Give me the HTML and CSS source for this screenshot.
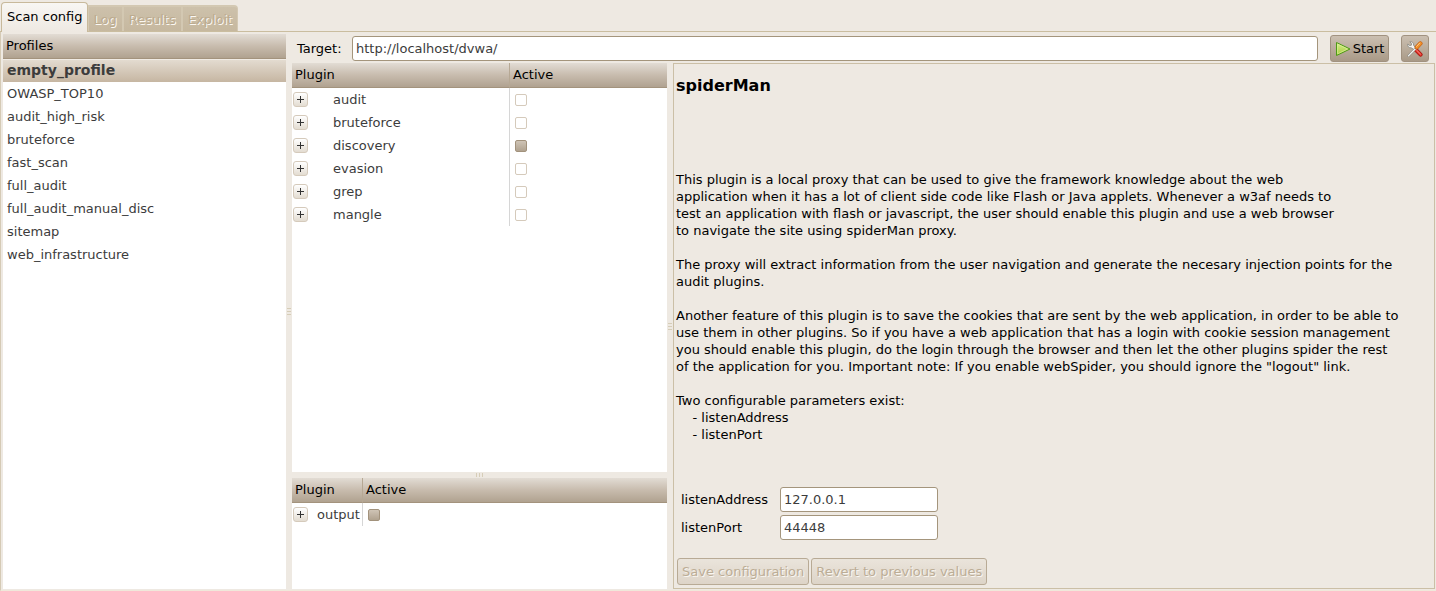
FILE: index.html
```
<!DOCTYPE html>
<html lang="en">
<head>
<meta charset="utf-8">
<title>Scan config</title>
<link rel="stylesheet" href="styles.css">
</head>
<body>
<div class="window">
  <nav class="tabs">
    <button class="tab tab-active" type="button">Scan config</button>
    <button class="tab" type="button" disabled>Log</button>
    <button class="tab" type="button" disabled>Results</button>
    <button class="tab" type="button" disabled>Exploit</button>
  </nav>
  <main class="page">
    <section class="profiles">
      <h2 class="list-header">Profiles</h2>
      <ul class="profile-list">
        <li class="profile profile-selected">empty_profile</li>
        <li class="profile">OWASP_TOP10</li>
        <li class="profile">audit_high_risk</li>
        <li class="profile">bruteforce</li>
        <li class="profile">fast_scan</li>
        <li class="profile">full_audit</li>
        <li class="profile">full_audit_manual_disc</li>
        <li class="profile">sitemap</li>
        <li class="profile">web_infrastructure</li>
      </ul>
    </section>
    <div class="grip"><i></i><i></i><i></i></div>
    <div class="workspace">
      <form class="toolbar">
        <label class="target-label" for="target">Target:</label>
        <input class="entry target-entry" id="target" type="text" value="http://localhost/dvwa/">
        <button class="button start" type="button">
          <svg width="16" height="16" viewBox="0 0 16 16" aria-hidden="true">
            <defs><linearGradient id="play" x1="0" y1="0" x2="0" y2="1"><stop offset="0" stop-color="#d8ee8c"/><stop offset="1" stop-color="#a4cc3a"/></linearGradient></defs>
            <path d="M1.5 1.5L15 8L1.5 14.5Z" fill="url(#play)" stroke="#4e9a16" stroke-linejoin="round"/>
            <path d="M2.6 3.2L12.6 8L2.6 12.8Z" fill="none" stroke="#e0f2a4" stroke-opacity=".6"/>
          </svg>
          Start
        </button>
        <button class="button tools" type="button" aria-label="Advanced target settings">
          <svg width="16" height="16" viewBox="0 0 16 16" aria-hidden="true">
            <path d="M8.5 8.5L13.6 13.6" stroke="#a3150f" stroke-width="4" stroke-linecap="round"/>
            <path d="M8.5 8.5L13.6 13.6" stroke="#e3352a" stroke-width="2.6" stroke-linecap="round"/>
            <path d="M9.6 9.2L13.4 13" stroke="#f79a8c" stroke-width=".9" stroke-linecap="round"/>
            <path d="M2.8 .8C5 .2 7 2 6.6 4.2L8.6 7L7 8.6L4.2 6.8C2 7.2 .2 5.2 .8 3L2.6 4.6L4.4 4.2L4.6 2.6Z" fill="#f4f4f2" stroke="#858580" stroke-width=".8" stroke-linejoin="round"/>
            <path d="M1.4 14.8L8.2 8" stroke="#85857f" stroke-width="2.2" stroke-linecap="round"/>
            <path d="M1.4 14.8L8.2 8" stroke="#f8f8f6" stroke-width="1.2" stroke-linecap="round"/>
            <path d="M9.8 6.2L13.4 2.4" stroke="#c45a0a" stroke-width="4.2" stroke-linecap="round"/>
            <path d="M9.8 6.2L13.4 2.4" stroke="#f0902c" stroke-width="3" stroke-linecap="round"/>
            <path d="M9.6 5.4L12.6 2.2" stroke="#fccb84" stroke-width="1" stroke-linecap="round"/>
          </svg>
        </button>
      </form>
      <div class="panes">
        <div class="plugin-lists">
          <div class="list-pane list-pane-main">
            <table class="plugins">
              <colgroup><col class="col-name"><col></colgroup>
              <thead><tr><th>Plugin</th><th>Active</th></tr></thead>
              <tbody>
                <tr><td><div class="node"><button class="expander" type="button" aria-label="Expand audit"></button><label for="p1">audit</label></div></td><td><input class="check" id="p1" type="checkbox"></td></tr>
                <tr><td><div class="node"><button class="expander" type="button" aria-label="Expand bruteforce"></button><label for="p2">bruteforce</label></div></td><td><input class="check" id="p2" type="checkbox"></td></tr>
                <tr><td><div class="node"><button class="expander" type="button" aria-label="Expand discovery"></button><label for="p3">discovery</label></div></td><td><input class="check check-mixed" id="p3" type="checkbox"></td></tr>
                <tr><td><div class="node"><button class="expander" type="button" aria-label="Expand evasion"></button><label for="p4">evasion</label></div></td><td><input class="check" id="p4" type="checkbox"></td></tr>
                <tr><td><div class="node"><button class="expander" type="button" aria-label="Expand grep"></button><label for="p5">grep</label></div></td><td><input class="check" id="p5" type="checkbox"></td></tr>
                <tr><td><div class="node"><button class="expander" type="button" aria-label="Expand mangle"></button><label for="p6">mangle</label></div></td><td><input class="check" id="p6" type="checkbox"></td></tr>
              </tbody>
            </table>
          </div>
          <div class="grip grip-row"><i></i><i></i><i></i></div>
          <div class="list-pane list-pane-output">
            <table class="plugins plugins-output">
              <colgroup><col class="col-name"><col></colgroup>
              <thead><tr><th>Plugin</th><th>Active</th></tr></thead>
              <tbody>
                <tr><td><div class="node"><button class="expander" type="button" aria-label="Expand output"></button><label for="p7">output</label></div></td><td><input class="check check-mixed" id="p7" type="checkbox"></td></tr>
              </tbody>
            </table>
          </div>
        </div>
        <div class="grip"><i></i><i></i><i></i></div>
        <section class="details">
          <h1 class="plugin-title">spiderMan</h1>
          <p class="description">This plugin is a local proxy that can be used to give the framework knowledge about the web
application when it has a lot of client side code like Flash or Java applets. Whenever a w3af needs to
test an application with flash or javascript, the user should enable this plugin and use a web browser
to navigate the site using spiderMan proxy.

The proxy will extract information from the user navigation and generate the necesary injection points for the
audit plugins.

Another feature of this plugin is to save the cookies that are sent by the web application, in order to be able to
use them in other plugins. So if you have a web application that has a login with cookie session management
you should enable this plugin, do the login through the browser and then let the other plugins spider the rest
of the application for you. Important note: If you enable webSpider, you should ignore the "logout" link.

Two configurable parameters exist:
    - listenAddress
    - listenPort</p>
          <form class="options">
            <label for="address">listenAddress</label>
            <input class="entry" id="address" type="text" value="127.0.0.1">
            <label for="port">listenPort</label>
            <input class="entry" id="port" type="text" value="44448">
          </form>
          <div class="actions">
            <button class="button" type="button" disabled>Save configuration</button>
            <button class="button" type="button" disabled>Revert to previous values</button>
          </div>
        </section>
      </div>
    </div>
  </main>
</div>
</body>
</html>
```
FILE: styles.css
```
* { box-sizing: border-box; }

body {
  margin: 0;
  background: #eee9e2;
  color: #000;
  font: 13px/17px "DejaVu Sans", sans-serif;
}

button, input { font: inherit; color: inherit; margin: 0; }

.window {
  display: flex;
  flex-direction: column;
  min-height: 100vh;
  padding: 2px 0 0;
}

/* Notebook tabs */
.tabs { display: flex; align-items: flex-end; height: 30px; padding-left: 1px; border-bottom: 1px solid #cabd9f; }
.tab {
  height: 26px;
  padding: 1px 5px 0;
  border: 1px solid #d3c8b2;
  border-top-width: 2px;
  border-bottom: 0;
  background: linear-gradient(#cdc1ab, #c6b89f);
  color: #bcab8f;
  text-shadow: 1px 1px #fbf8f2;
  white-space: nowrap;
}
.tab:last-child { border-radius: 0 4px 0 0; }
.tab-active {
  height: 30px;
  margin-bottom: -1px;
  padding: 0 4px 2px 5px;
  border-width: 1px 1px 0;
  border-color: #c8b99b;
  border-radius: 4px 4px 0 0;
  background: linear-gradient(#f8f6f3, #eee9e2);
  color: #000;
  text-shadow: none;
}

.page {
  display: flex;
  flex: 1;
  padding: 2px 1px 1px 2px;
  border-left: 1px solid #d5cab5;
  border-bottom: 1px solid #f0e8da;
}

.list-header, .plugins th {
  height: 25px;
  margin: 0;
  padding: 0 3px;
  border-bottom: 1px solid #a3937d;
  background: linear-gradient(#e2dcd4, #c8bcae 50%, #b0a290);
  font-weight: normal;
  font-size: inherit;
  line-height: 24px;
  text-align: left;
}

/* Profiles */
.profiles { flex: 0 0 283px; background: #fff; }
.profile-list { margin: 0; padding: 0; list-style: none; color: #3c3c3c; }
.profile { height: 23px; padding: 0 4px; line-height: 23px; }
.profile-selected {
  background: linear-gradient(#e3dbd0, #c6b6a2);
  border-top: 1px solid #f0ebe4;
  font-weight: bold;
  font-size: 14px;
  line-height: 21px;
}

/* Pane separators */
.grip { display: flex; flex: 0 0 6px; flex-direction: column; align-items: center; justify-content: center; gap: 2px; }
.grip i { width: 4px; height: 1px; background: #d6cdb8; }
.grip-row { flex-direction: row; }
.grip-row i { width: 1px; height: 4px; }

.workspace { display: flex; flex: 1; flex-direction: column; min-width: 0; }

/* Target toolbar */
.toolbar { display: flex; align-items: center; height: 29px; padding: 0 6px 0 5px; }
.target-label { width: 55px; }
.entry {
  height: 25px;
  min-width: 0;
  padding: 0 3px;
  border: 1px solid #a4957c;
  border-radius: 3px;
  background: #fff;
  color: #3c3c3c;
  outline: 0;
}
.target-entry { flex: 1; margin-right: 12px; }
.button {
  display: flex;
  align-items: center;
  justify-content: center;
  gap: 2px;
  height: 27px;
  padding: 0 4px;
  border: 1px solid #a19280;
  border-radius: 3px;
  background: linear-gradient(#cbbfb1, #a99a87);
  white-space: nowrap;
}
.start { width: 59px; margin-right: 12px; }
.start svg, .tools svg { flex: none; }
.tools { width: 28px; }
.button:disabled {
  border-color: #b8aa95;
  background: linear-gradient(#eae4db, #ddd4c8);
  color: #bcad96;
  text-shadow: 1px 1px #f9f6f1;
}

.panes { display: flex; flex: 1; }

/* Plugin trees */
.plugin-lists { display: flex; flex: 0 0 375px; flex-direction: column; }
.list-pane { background: #fff; }
.list-pane-main { flex: 1; }
.list-pane-output { flex: 0 0 111px; }
.plugins { width: 100%; border-collapse: separate; border-spacing: 0; table-layout: fixed; }
.col-name { width: 218px; }
.plugins-output .col-name { width: 71px; }
.plugins th:first-child { border-right: 1px solid #b6a894; }
.plugins td { height: 23px; padding: 0 0 0 5px; color: #3c3c3c; }
.plugins td:first-child { padding: 0 0 0 1px; border-right: 1px solid #d6d6d6; }
.node { display: flex; align-items: center; gap: 25px; }
.plugins-output .node { gap: 9px; }
.expander {
  flex: none;
  width: 15px;
  height: 15px;
  padding: 0;
  border: 1px solid #d5cabb;
  border-radius: 3px;
  background:
    linear-gradient(#333, #333) center / 7px 1px no-repeat,
    linear-gradient(#333, #333) center / 1px 7px no-repeat,
    linear-gradient(#fff, #e3dcd1);
}
.check {
  display: block;
  width: 12px;
  height: 12px;
  border: 1px solid #d5cabb;
  border-radius: 2px;
  background: #fff;
  appearance: none;
}
.check-mixed { border-color: #a2927c; background: linear-gradient(#cfc4b6, #b0a28f); }

/* Plugin details */
.details {
  display: flex;
  flex: 1;
  flex-direction: column;
  min-width: 0;
  padding: 13px 3px 3px 2px;
  border: 1px solid #cbbfa6;
}
.plugin-title { margin: 0; font-weight: bold; font-size: 16px; line-height: 17px; }
.description { margin: 77px 0 0; white-space: pre-wrap; }
.options {
  display: grid;
  grid-template-columns: 94px 158px;
  gap: 3px 5px;
  align-items: center;
  margin-top: 44px;
  padding-left: 5px;
}
.actions { display: flex; gap: 2px; margin: auto 0 0 1px; }
```
